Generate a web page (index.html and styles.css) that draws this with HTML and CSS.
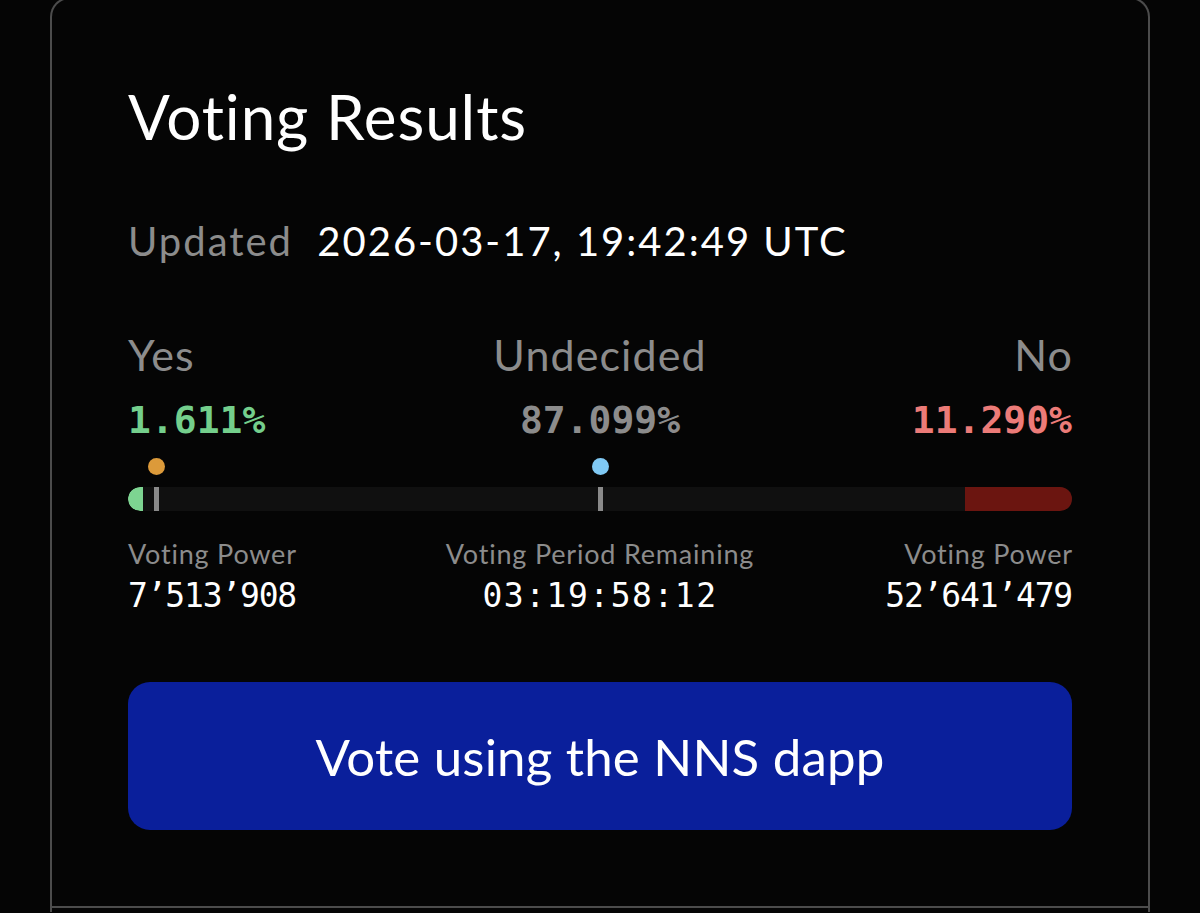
FILE: index.html
```html
<!DOCTYPE html>
<html lang="en">

<head>
    <meta charset="utf-8">
    <title>Voting Results</title>
    <link rel="stylesheet" href="styles.css">
</head>

<body>

    <div class="card">
        <section class="results">
            <h2 class="title">Voting Results</h2>

            <div class="updated">
                <span class="updated-label">Updated</span>
                <span class="updated-stamp">2026-03-17, 19:42:49 UTC</span>
            </div>

            <div class="tally">
                <div class="tally-col yes">
                    <div class="tally-label">Yes</div>
                    <div class="tally-pct">1.611%</div>
                </div>
                <div class="tally-col undecided">
                    <div class="tally-label">Undecided</div>
                    <div class="tally-pct">87.099%</div>
                </div>
                <div class="tally-col no">
                    <div class="tally-label">No</div>
                    <div class="tally-pct">11.290%</div>
                </div>
            </div>

            <!-- progress: yes grows from the left, no from the right -->
            <div class="bar-wrap">
                <span class="dot dot-min" style="left: 3%"></span>
                <span class="dot dot-majority" style="left: 50%"></span>
                <div class="bar">
                    <span class="bar-yes" style="width: 1.611%"></span>
                    <span class="bar-no" style="width: 11.290%"></span>
                    <span class="tick" style="left: 3%"></span>
                    <span class="tick" style="left: 50%"></span>
                </div>
            </div>

            <div class="details">
                <div class="detail">
                    <div class="detail-label">Voting Power</div>
                    <div class="detail-value">7’513’908</div>
                </div>
                <div class="detail center">
                    <div class="detail-label">Voting Period Remaining</div>
                    <div class="detail-value timer">03:19:58:12</div>
                </div>
                <div class="detail right">
                    <div class="detail-label">Voting Power</div>
                    <div class="detail-value">52’641’479</div>
                </div>
            </div>

            <a class="vote-btn" href="#">Vote using the NNS dapp</a>
        </section>

        <section class="more"></section>
    </div>

</body>

</html>
```

FILE: styles.css
```css
body {
    margin: 0;
    background: #050505;
    color: #fff;
    font-family: Lato, "Noto Sans", sans-serif;
    overflow: hidden;
}

.card {
    margin: -3px 0 0 50px;
    width: 1096px;
    border: 2px solid #4c4c4c;
    border-bottom: none;
    border-radius: 20px 20px 0 0;
}

.results {
    padding: 81px 76px 76px;
    border-bottom: 2px solid #4c4c4c;
}

.more {
    height: 4px;
}

.title {
    margin: 0;
    font-size: 62px;
    font-weight: 400;
    line-height: 72px;
    letter-spacing: 0.9px;
}

.updated {
    margin-top: 65px;
    font-size: 40px;
    line-height: 48px;
    letter-spacing: 2px;
}

.updated-label {
    color: #8c8c8c;
    margin-right: 12px;
}

.tally {
    display: grid;
    grid-template-columns: 1fr 1fr 1fr;
    margin-top: 65px;
}

.tally-label {
    font-size: 43px;
    line-height: 50px;
    letter-spacing: 1.1px;
    color: #8c8c8c;
}

.tally-pct {
    margin-top: 18px;
    font-family: "DejaVu Sans Mono", monospace;
    font-weight: 700;
    font-size: 38px;
    line-height: 44px;
}

.yes .tally-pct {
    color: #74cf8c;
}

.undecided {
    text-align: center;
}

.undecided .tally-pct {
    color: #8c8c8c;
}

.no {
    text-align: right;
}

.no .tally-label {
    margin-right: -1px;
}

.no .tally-pct {
    color: #ec7b78;
}

.bar-wrap {
    position: relative;
    margin-top: 16px;
    padding-top: 29px;
}

.bar {
    position: relative;
    height: 24px;
    background: #101010;
    border-radius: 12px;
    overflow: hidden;
}

.bar-yes {
    position: absolute;
    left: 0;
    top: 0;
    bottom: 0;
    background: #7dd491;
    border-radius: 12px 0 0 12px;
}

.bar-no {
    position: absolute;
    right: 0;
    top: 0;
    bottom: 0;
    background: #6b1510;
}

.tick {
    position: absolute;
    top: 0;
    width: 5px;
    height: 24px;
    margin-left: -2px;
    background: #8a8a8a;
}

.dot {
    position: absolute;
    top: 0;
    width: 17px;
    height: 17px;
    margin-left: -8px;
    border-radius: 50%;
}

.dot-min {
    background: #dc9a3a;
}

.dot-majority {
    background: #80c9f4;
}

.details {
    display: grid;
    grid-template-columns: 1fr 1fr 1fr;
    margin-top: 27px;
}

.detail.center {
    text-align: center;
}

.detail.right {
    text-align: right;
}

.detail-label {
    font-size: 27px;
    line-height: 32px;
    letter-spacing: 0.8px;
    color: #8c8c8c;
}

.detail.right .detail-label {
    margin-right: -1px;
}

.detail-value {
    margin-top: 6px;
    font-family: "DejaVu Sans Mono", monospace;
    font-size: 33px;
    line-height: 40px;
    letter-spacing: -1.2px;
}

.detail-value.timer {
    letter-spacing: 1.5px;
}

.vote-btn {
    display: flex;
    align-items: center;
    justify-content: center;
    height: 148px;
    margin-top: 66px;
    border-radius: 22px;
    background: #0a1f9b;
    color: #fff;
    font-size: 51px;
    letter-spacing: 0.2px;
    text-decoration: none;
}
```
